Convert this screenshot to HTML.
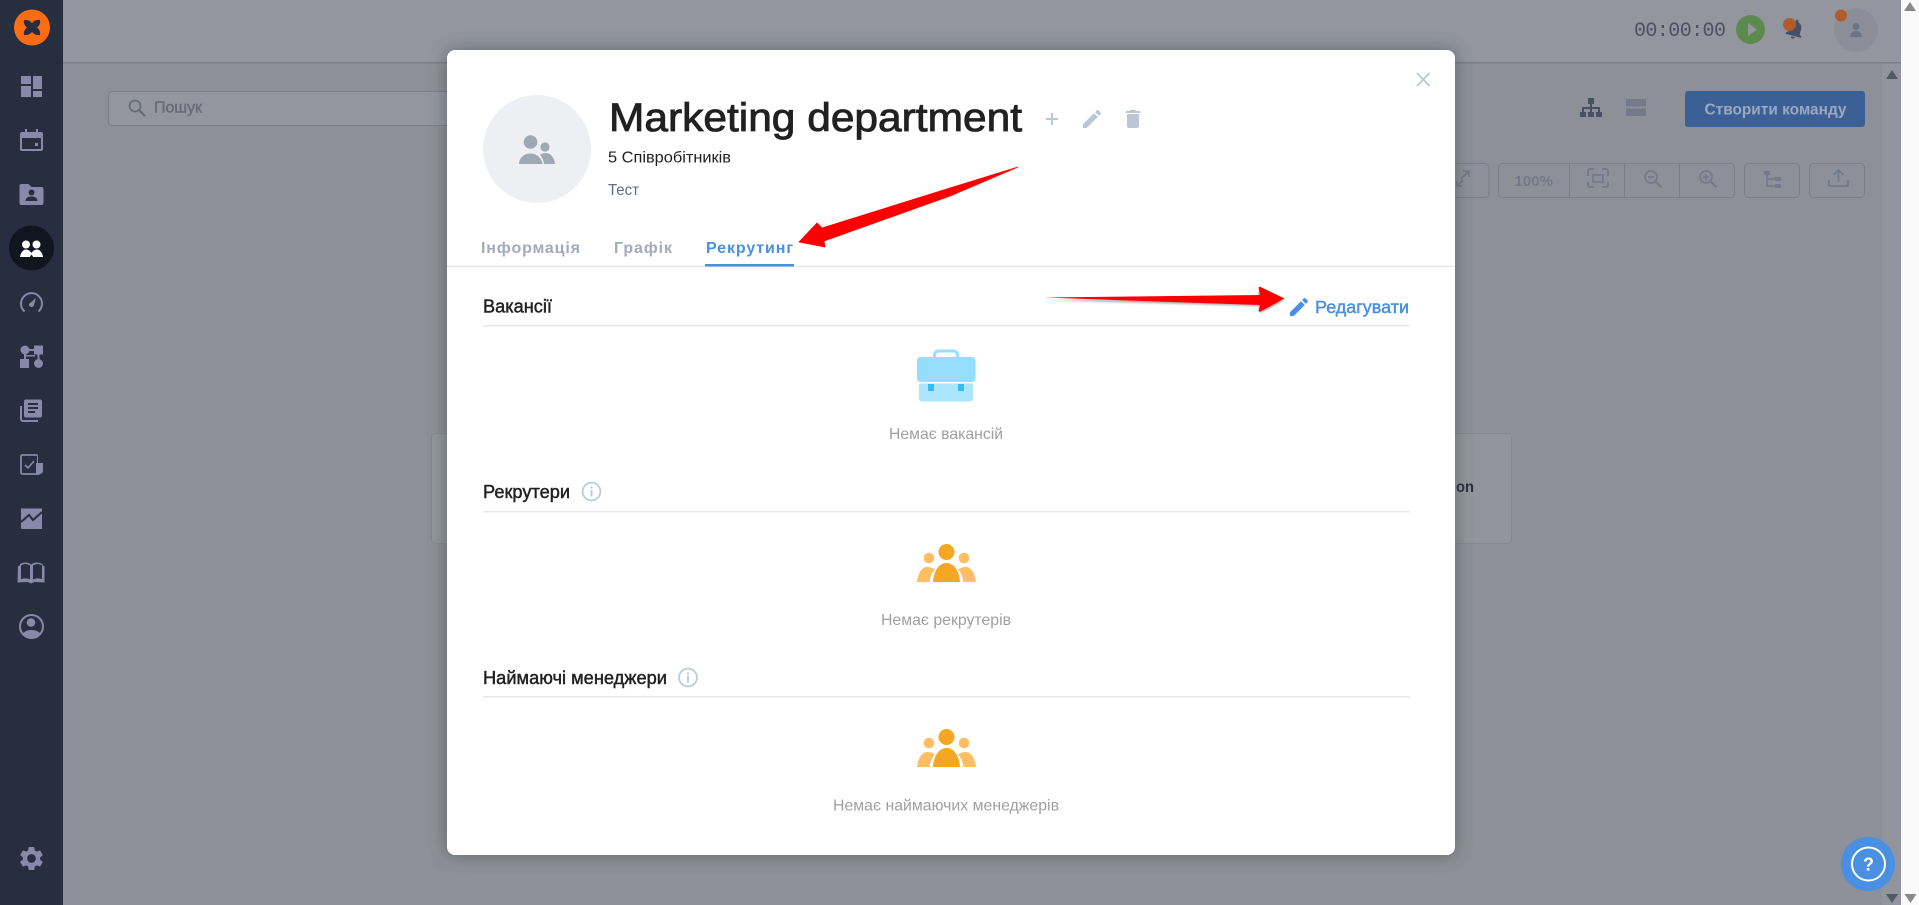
<!DOCTYPE html>
<html lang="uk"><head><meta charset="utf-8"><title>Marketing department</title>
<style>
html,body{margin:0;padding:0;background:#fafafa;overflow:hidden;width:1919px;height:905px}
svg{display:block;position:absolute;left:0;top:0}
text{font-family:"Liberation Sans",sans-serif}
.m{stroke-width:.45px}
.t{stroke-width:.85px}
</style></head><body>
<svg width="1919" height="905" viewBox="0 0 1919 905" xmlns="http://www.w3.org/2000/svg">
<defs>
<filter id="sh" x="-10%" y="-10%" width="120%" height="120%"><feGaussianBlur stdDeviation="9"/></filter>
<filter id="as" x="-5%" y="-50%" width="110%" height="200%"><feGaussianBlur stdDeviation="1"/></filter>
<clipPath id="uc"><circle cx="31.5" cy="626.5" r="11"/></clipPath>
<g id="ppl">
<circle cx="28" cy="14" r="5.3" fill="#ffbe62"/><circle cx="63" cy="14" r="5.3" fill="#ffbe62"/>
<circle cx="45.500" cy="8" r="8" fill="#f5a623"/>
<path d="M16 38c1-9 5-15 10-15 3 0 6 1 8 2.500-3 3-5 8-5.500 12.500z" fill="#ffbe62"/>
<path d="M75 38c-1-9-5-15-10-15-3 0-6 1-8 2.500 3 3 5 8 5.500 12.500z" fill="#ffbe62"/>
<path d="M32 38c.5-10 5.500-19 13.500-19S58.500 28 59 38z" fill="#f5a623"/>
</g>
<g id="info" fill="none"><circle r="8.900" stroke="#c0c9da" stroke-width="1.800"/><rect x="-1" y="-1.500" width="2" height="6.500" fill="#c0c9da"/><circle cy="-4" r="1.200" fill="#c0c9da"/></g>
</defs>

<!-- page base -->
<rect width="1919" height="905" fill="#fafafa"/>
<rect x="63" width="1838" height="905" fill="#8d9098"/>
<rect x="1882" y="63" width="19" height="842" fill="#92959d"/>
<rect x="63" width="1838" height="62" fill="#93969f"/>
<rect x="63" y="62" width="1838" height="1.500" fill="#7b7e88"/>

<!-- sidebar -->
<rect width="63" height="905" fill="#272e3f"/>
<circle cx="32" cy="27.500" r="18" fill="#ff6d12"/>
<path d="M24 20c3-.6 6 .5 8 3 2-2.500 5-3.600 8-3 .7 3-.5 5.500-3 7.500 2.500 2 3.700 4.500 3 7.500-3 .6-6-.5-8-3-2 2.500-5 3.600-8 3-.7-3 .5-5.500 3-7.500-2.500-2-3.700-4.500-3-7.500z" fill="#272e3f"/>
<g fill="#868aa8">
<rect x="21" y="76" width="10" height="8"/><rect x="21" y="86" width="10" height="11"/><rect x="33" y="76" width="9" height="13"/><rect x="33" y="91" width="9" height="6"/>
<path fill-rule="evenodd" d="M22 132h3v-3h2v3h9v-3h2v3h3a2 2 0 0 1 2 2v15a2 2 0 0 1-2 2H22a2 2 0 0 1-2-2v-15a2 2 0 0 1 2-2zm0 6v11h19v-11z"/><rect x="35" y="143" width="3" height="3"/>
<path d="M22 184h7l3 3h10a2 2 0 0 1 2 2v14a2 2 0 0 1-2 2H22a2 2 0 0 1-2-2v-17a2 2 0 0 1 2-2z" transform="translate(-.5 0)"/>
</g>
<circle cx="31.500" cy="192.500" r="3" fill="#272e3f"/><path d="M25.500 201c.2-3.500 3-4.500 6-4.500s5.800 1 6 4.500z" fill="#272e3f"/>
<circle cx="31.500" cy="248" r="22.500" fill="#111520"/>
<g fill="#fff"><circle cx="26" cy="244.500" r="4"/><circle cx="36.500" cy="244.500" r="4"/><path d="M20 257c.5-4 3-7.500 6-7.500s4.500 2 5.500 3.500c1-1.500 2.500-3.500 5.500-3.500s5.500 3.500 6 7.500H33c-.3-.8-1-2-1.500-2.500-.5.5-1.200 1.700-1.500 2.500z"/></g>
<path d="M24.500 311.500a10.500 10.500 0 1 1 14 0" fill="none" stroke="#868aa8" stroke-width="2"/>
<path d="M36 298l-2 7a2.500 2.500 0 0 1-5-1z" fill="#868aa8"/>
<g fill="#868aa8">
<circle cx="25" cy="350" r="4.500"/><rect x="34" y="345.500" width="9" height="9"/><rect x="20" y="359" width="9" height="9"/><circle cx="38.500" cy="363.500" r="4.500"/>
<rect x="25" y="349" width="12" height="2"/><rect x="24" y="354" width="2" height="6"/><rect x="37.500" y="354" width="2" height="6"/><rect x="26" y="355" width="9" height="1.500"/>
</g>
<path d="M21 406v13a2 2 0 0 0 2 2h15" fill="none" stroke="#868aa8" stroke-width="2"/>
<rect x="24" y="399.500" width="18" height="18" rx="2" fill="#868aa8"/>
<rect x="28" y="403" width="10" height="2" fill="#272e3f"/><rect x="28" y="407" width="10" height="2" fill="#272e3f"/><rect x="28" y="411" width="7" height="2" fill="#272e3f"/>
<path d="M37.500 455H22.500a1.500 1.500 0 0 0-1.500 1.500v16a1.500 1.500 0 0 0 1.500 1.500h17" fill="none" stroke="#868aa8" stroke-width="1.800"/><path d="M37 455h1v8h5v8a3 3 0 0 1-3 3h-4v-11h1z" fill="#868aa8"/>
<path d="M25 465l3 3 6-7" fill="none" stroke="#868aa8" stroke-width="1.600"/>
<path d="M21 508.500h21v20.500H22l-1-.5z" fill="#868aa8"/>
<path d="M21 522l8-7 4 5 9-8" fill="none" stroke="#272e3f" stroke-width="2"/>
<path fill-rule="evenodd" fill="#868aa8" d="M18 566l2-.5v-1.500c4-2 8-2 11 .5 3.500-2.500 7-2.500 11.500-.5v1.500l2 .5v16.500l-10-.5-3.500 1.500-3.500-1.500-10 .5zM21 565.500v13.500c3.500-1 6.500-.8 9 .5v-14c-3-2-6-2-9 0zM33 565.500v14c2.500-1.300 5.500-1.500 9-.5v-13.500c-3-2-6-2-9 0z"/>
<circle cx="31.500" cy="626.500" r="11.500" fill="none" stroke="#868aa8" stroke-width="2"/>
<circle cx="31" cy="622.500" r="4.300" fill="#868aa8"/>
<path clip-path="url(#uc)" d="M20 640c0-6 5-10 11.500-10s11.500 4 11.500 10z" fill="#868aa8"/>
<path transform="translate(17.100 844.100) scale(1.200)" fill="#868aa8" d="M19.140 12.940c.04-.3.06-.61.06-.94 0-.32-.02-.64-.07-.94l2.030-1.580c.18-.14.23-.41.12-.61l-1.920-3.320c-.12-.22-.37-.29-.59-.22l-2.390.96c-.5-.38-1.030-.7-1.620-.94l-.36-2.540c-.04-.24-.24-.41-.48-.41h-3.840c-.24 0-.43.17-.47.41l-.36 2.540c-.59.24-1.130.57-1.620.94l-2.390-.96c-.22-.08-.47 0-.59.22L2.740 8.870c-.12.21-.08.47.12.61l2.030 1.580c-.05.3-.09.63-.09.94s.02.64.07.94l-2.030 1.580c-.18.14-.23.41-.12.61l1.920 3.320c.12.22.37.29.59.22l2.390-.96c.5.38 1.030.7 1.620.94l.36 2.540c.05.24.24.41.48.41h3.840c.24 0 .44-.17.47-.41l.36-2.540c.59-.24 1.130-.56 1.620-.94l2.390.96c.22.08.47 0 .59-.22l1.920-3.320c.12-.22.07-.47-.12-.61l-2.010-1.580zM12 15.600c-1.980 0-3.600-1.620-3.600-3.600s1.620-3.600 3.600-3.600 3.600 1.620 3.600 3.600-1.620 3.600-3.600 3.600z"/>

<!-- search -->
<rect x="108.500" y="91.500" width="400" height="34" rx="4" fill="#93969e" stroke="#7a7e8a"/>
<circle cx="135" cy="106" r="5.500" fill="none" stroke="#686c78" stroke-width="1.800"/><path d="M139 110l6 6" stroke="#686c78" stroke-width="2.200"/>
<text x="154" y="112.500" font-size="16" fill="#686c78" stroke="#686c78" class="m" textLength="48" lengthAdjust="spacingAndGlyphs">Пошук</text>

<!-- header right -->
<text x="1634" y="36" font-size="20" fill="#4c5263" style="font-family:'Liberation Mono',monospace" textLength="92" lengthAdjust="spacing">00:00:00</text>
<circle cx="1750.500" cy="29.500" r="14.500" fill="#5c8a4c"/><path d="M1748 23v13l9-6.500z" fill="#93969f"/>
<path transform="translate(1783 17) rotate(15 12 12)" fill="#475064" d="M12 22c1.100 0 2-.9 2-2h-4c0 1.100.9 2 2 2zm6-6v-5c0-3.070-1.630-5.640-4.500-6.320V4c0-.83-.67-1.500-1.500-1.500s-1.500.67-1.500 1.500v.68C7.640 5.360 6 7.920 6 11v5l-2 2v1h16v-1l-2-2z"/>
<circle cx="1789.500" cy="24.500" r="6.500" fill="#b05b2b"/>
<circle cx="1856" cy="30" r="22" fill="#8c8f99"/>
<circle cx="1856" cy="26.500" r="3.500" fill="#6d7383"/><path d="M1850 37c0-4 3-6 6-6s6 2 6 6z" fill="#6d7383"/>
<circle cx="1841" cy="15.500" r="6" fill="#b05b2b"/>

<!-- toolbar -->
<g fill="#475064"><rect x="1588" y="98" width="6" height="6"/><rect x="1580" y="112" width="6" height="5"/><rect x="1588" y="112" width="6" height="5"/><rect x="1596" y="112" width="6" height="5"/><rect x="1590" y="104" width="2" height="8"/><rect x="1582" y="107" width="18" height="2"/><rect x="1582" y="107" width="2" height="5"/><rect x="1598" y="107" width="2" height="5"/></g>
<rect x="1626" y="99" width="20" height="7.500" fill="#747a8a"/><rect x="1626" y="108.500" width="20" height="7.500" fill="#747a8a"/>
<rect x="1685" y="91" width="180" height="36" rx="3" fill="#3b6096"/>
<text x="1704.500" y="114.500" font-size="16" font-weight="700" fill="#9aa7bf" textLength="142" lengthAdjust="spacingAndGlyphs">Створити команду</text>

<rect x="1400" y="163.500" width="89" height="34" rx="4" fill="none" stroke="#7a7e8a"/>
<path d="M1461 179l8-8m-6 0h6v6M1463 180l-6 6m0-5v5h5" fill="none" stroke="#747a8a" stroke-width="1.800"/>
<rect x="1498.500" y="163.500" width="236" height="34" rx="4" fill="none" stroke="#7a7e8a"/>
<path d="M1569.500 164v33M1624.500 164v33M1679.500 164v33" stroke="#7a7e8a"/>
<text x="1514.500" y="186" font-size="14.500" font-weight="700" fill="#737988" textLength="38.500" lengthAdjust="spacingAndGlyphs">100%</text>
<path d="M1588 176v-5a2 2 0 0 1 2-2h4M1602 169h4a2 2 0 0 1 2 2v5M1608 182v3a2 2 0 0 1-2 2h-4M1594 187h-4a2 2 0 0 1-2-2v-3" fill="none" stroke="#747a8a" stroke-width="1.800"/>
<rect x="1593" y="175" width="10" height="7" fill="none" stroke="#747a8a" stroke-width="1.800"/>
<g fill="none" stroke="#747a8a" stroke-width="1.800">
<circle cx="1651" cy="177" r="6"/><path d="M1655.500 181.500l6 6" stroke-width="2.200"/><path d="M1648 177h6"/>
<circle cx="1706" cy="177" r="6"/><path d="M1710.500 181.500l6 6" stroke-width="2.200"/><path d="M1703 177h6M1706 174v6"/>
</g>
<rect x="1744.500" y="163.500" width="55" height="34" rx="4" fill="none" stroke="#7a7e8a"/>
<rect x="1809.500" y="163.500" width="55" height="34" rx="4" fill="none" stroke="#7a7e8a"/>
<g fill="#747a8a"><rect x="1764" y="171" width="6" height="4"/><rect x="1775" y="177" width="6" height="4"/><rect x="1775" y="184" width="6" height="4"/></g>
<path d="M1767 175v11h8M1767 179h8" fill="none" stroke="#747a8a" stroke-width="1.800"/>
<path d="M1829 180v6h19v-6M1838.500 182v-11M1833.500 175l5-5 5 5" fill="none" stroke="#747a8a" stroke-width="1.800"/>

<!-- background card -->
<rect x="431.500" y="433.500" width="1080" height="110" rx="4" fill="#92959d" stroke="#868992"/>
<text x="1456" y="492" font-size="16" font-weight="700" fill="#2a2f3c" textLength="18" lengthAdjust="spacingAndGlyphs">on</text>

<!-- scrollbars -->
<path d="M1910 2l6 9h-12z" fill="#8a8a8a"/><path d="M1892 70l6 9h-12z" fill="#555965"/>
<path d="M1892 903l-6-9h12z" fill="#555965"/><path d="M1910.500 903l-6-9h12z" fill="#8a8a8a"/>

<!-- modal -->
<rect x="447" y="50" width="1008" height="805" rx="8" fill="#3d4048" opacity=".55" filter="url(#sh)"/>
<rect x="447" y="50" width="1008" height="805" rx="8" fill="#fff"/>

<circle cx="537" cy="149" r="54" fill="#edeff3"/>
<circle cx="530.500" cy="142" r="6.800" fill="#a0a7b5"/><circle cx="545" cy="147" r="4.600" fill="#a0a7b5"/>
<path d="M519 164c0-6 5-10.500 11.500-10.500 6.500 0 11 4.500 12 10.500z" fill="#a0a7b5"/>
<path d="M544 164c-.5-4-2-7-4-9 1.500-1.500 3.500-2 5.500-2 5 0 9 4.500 9.500 11z" fill="#a0a7b5"/>

<text x="609" y="131" font-size="40" class="t" fill="#212121" stroke="#212121" textLength="413" lengthAdjust="spacingAndGlyphs">Marketing department</text>
<path d="M1052 113v12M1046 119h12" stroke="#bcc5d6" stroke-width="2"/>
<path transform="translate(1080 107)" fill="#bcc5d6" d="M3 17.250V21h3.750L17.810 9.940l-3.750-3.750L3 17.250zM20.710 7.040c.39-.39.39-1.020 0-1.410l-2.340-2.340c-.39-.39-1.020-.39-1.410 0l-1.830 1.830 3.750 3.750 1.830-1.830z"/>
<path transform="translate(1121 107)" fill="#bcc5d6" d="M6 19c0 1.100.9 2 2 2h8c1.100 0 2-.9 2-2V7H6v12zM19 4h-3.500l-1-1h-5l-1 1H5v2h14V4z"/>
<path d="M1417 73l12.500 13M1429.500 73L1417 86" stroke="#bcc5d6" stroke-width="1.800"/>

<text x="608" y="162.500" font-size="16" fill="#212121" textLength="123" lengthAdjust="spacingAndGlyphs">5 Співробітників</text>
<text x="608" y="195" font-size="16" fill="#5f6b8a" textLength="31" lengthAdjust="spacingAndGlyphs">Тест</text>

<text x="481" y="253" font-size="16" font-weight="700" fill="#a3aaba" textLength="99" lengthAdjust="spacing">Інформація</text>
<text x="614" y="253" font-size="16" font-weight="700" fill="#a3aaba" textLength="58" lengthAdjust="spacing">Графік</text>
<text x="706" y="253" font-size="16" font-weight="700" fill="#4a90e2" textLength="87" lengthAdjust="spacing">Рекрутинг</text>
<rect x="447" y="265.500" width="1008" height="1.500" fill="#e6e8ec"/>
<rect x="705" y="264" width="89" height="2.500" fill="#4a90e2"/>

<text x="483" y="312.500" font-size="18" class="m" fill="#222" stroke="#222" textLength="69" lengthAdjust="spacingAndGlyphs">Вакансії</text>
<path transform="translate(1287 295)" fill="#4a90e2" d="M3 17.250V21h3.750L17.810 9.940l-3.750-3.750L3 17.250zM20.710 7.040c.39-.39.39-1.020 0-1.410l-2.340-2.340c-.39-.39-1.020-.39-1.410 0l-1.830 1.830 3.750 3.750 1.830-1.830z"/>
<text x="1315" y="313" font-size="17.500" class="m" fill="#4a90e2" stroke="#4a90e2" textLength="94" lengthAdjust="spacingAndGlyphs">Редагувати</text>
<rect x="483" y="325" width="927" height="1.500" fill="#e6e8ec"/>

<!-- briefcase -->
<path d="M934.500 358v-3a4 4 0 0 1 4-4h15a4 4 0 0 1 4 4v3" fill="none" stroke="#9adfff" stroke-width="3"/>
<rect x="917" y="357" width="58.500" height="25" rx="3.500" fill="#96deff"/>
<path d="M919 383.500h54v15a3 3 0 0 1-3 3h-48a3 3 0 0 1-3-3z" fill="#ace5ff"/>
<rect x="928" y="384" width="6" height="7" fill="#36bbff"/><rect x="958" y="384" width="6" height="7" fill="#36bbff"/>
<text x="889" y="439" font-size="16" fill="#a0a0a0" textLength="114" lengthAdjust="spacingAndGlyphs">Немає вакансій</text>

<text x="483" y="498" font-size="18" class="m" fill="#222" stroke="#222" textLength="87" lengthAdjust="spacingAndGlyphs">Рекрутери</text>
<use href="#info" x="591.500" y="491.500"/>
<rect x="483" y="511" width="927" height="1.500" fill="#e6e8ec"/>
<use href="#ppl" x="901" y="544"/>
<text x="881" y="625" font-size="16" fill="#a0a0a0" textLength="130" lengthAdjust="spacingAndGlyphs">Немає рекрутерів</text>

<text x="483" y="684" font-size="18" class="m" fill="#222" stroke="#222" textLength="184" lengthAdjust="spacingAndGlyphs">Наймаючі менеджери</text>
<use href="#info" x="688" y="677.500"/>
<rect x="483" y="696" width="927" height="1.500" fill="#e6e8ec"/>
<use href="#ppl" x="901" y="729"/>
<text x="833" y="810.500" font-size="16" fill="#a0a0a0" textLength="226" lengthAdjust="spacingAndGlyphs">Немає наймаючих менеджерів</text>

<!-- help -->
<circle cx="1868" cy="864" r="27" fill="#4a90e2"/>
<circle cx="1868.500" cy="864" r="16.500" fill="none" stroke="#fff" stroke-width="2"/>
<text x="1868.500" y="870.500" font-size="18" font-weight="700" fill="#fff" text-anchor="middle">?</text>

<!-- red arrows -->
<g filter="url(#as)" opacity=".45" fill="#333">
<path d="M1044 299l215-1-1-7 25 9-23 12-1-7z" transform="translate(0 1)"/>
</g>
<path d="M1018 167L950 188 822 228 817 223 799 242 825 247 824 241 950 196z" fill="#f00" stroke="#f00" stroke-width=".8" stroke-linejoin="round"/>
<path d="M1044 297.500l216-2.500-1.500-7c0-1 1-1.500 2-1l24 11.500-24 13c-1 .5-2-.5-2-1l1.500-5.500z" fill="#f00"/>
</svg>
</body></html>
